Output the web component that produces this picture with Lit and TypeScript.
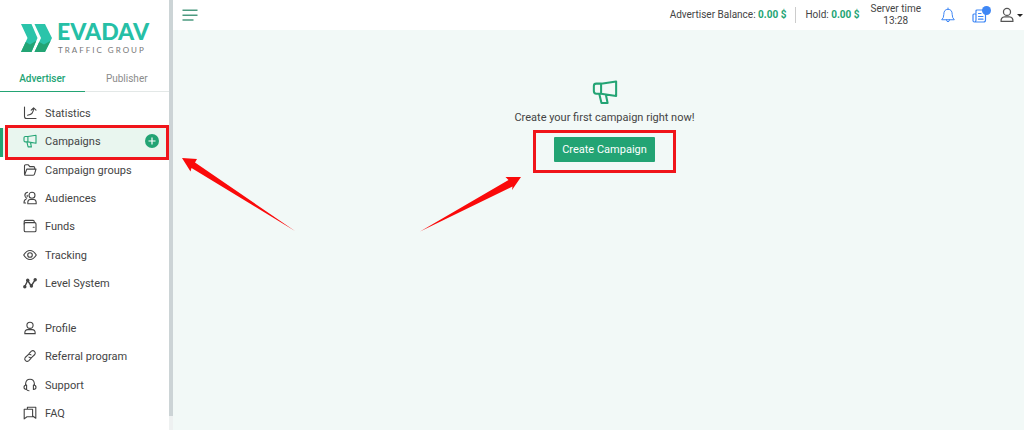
import { LitElement, html, css, svg, nothing } from "lit";
import { customElement, property, state } from "lit/decorators.js";

const megaphone = svg`<path d="M4.900 2.500H2.300Q1 2.500 1 3.800V6.500Q1 7.900 2.300 7.900H4.900ZM4.900 2.500L13 1.300V9.200L4.900 7.900M3.900 8L5.100 12.900H8.400L7.500 8.600"/>`;

const icons: Record<string, unknown> = {
  statistics: svg`<path d="M1.5 1V10.5Q1.5 12.5 3.5 12.5H13M4.5 9.3Q10.6 8.6 10.6 2M8.2 4.2L10.6 1.8L13 4.2"/>`,
  megaphone,
  folder: svg`<path d="M1.5 11V3Q1.5 1.8 2.7 1.8H5.3L6.8 3.6H10.5Q11.7 3.6 11.7 4.8V6M1.6 12L3.8 6.1H13L11.5 11.2Q11.2 12.2 10.2 12.2H2.2Q1.5 12.2 1.5 11"/>`,
  audiences: svg`<circle cx="9" cy="4.3" r="3"/><path d="M4.8 12.7Q4.4 8.6 7.4 8.5H10.6Q13.5 8.6 13.2 12.7ZM4.6 1.3Q1.6 1.8 1.9 4.7Q2.1 6.2 3.7 7.2M3 8.3Q.9 9 1 12H2.6M4.2 4.2V5.6"/>`,
  wallet: svg`<rect x="1.2" y="3.6" width="11.8" height="9.1" rx="1.3"/><path d="M1.2 5V2.6Q1.2 1.4 2.4 1.4H10.2Q11.4 1.4 11.4 3.5M10.2 8.2H11.2"/>`,
  eye: svg`<path d="M.7 7Q3.4 2.5 7 2.5T13.3 7Q10.6 11.5 7 11.5T.7 7Z"/><circle cx="7" cy="7" r="2.3"/>`,
  level: svg`<path d="M1.6 11L4.7 4.5L8.2 10L12.3 3.6" stroke-width="1.4"/><g fill="currentColor" stroke="none"><circle cx="1.8" cy="10.8" r="1.7"/><circle cx="4.7" cy="4.3" r="1.7"/><circle cx="8.4" cy="10" r="1.7"/><circle cx="12.2" cy="3.7" r="1.7"/></g>`,
  person: svg`<circle cx="7" cy="4.3" r="3.1"/><path d="M1.8 12.6Q1.6 8.7 4.9 8.6H9.1Q12.4 8.7 12.2 12.6Z"/>`,
  link: svg`<path d="M6 4.6L8.4 2.2Q9.9.9 11.5 2.3Q13 3.9 11.8 5.5L9 8.2Q7.5 9.3 6 8.1M8 9.4L5.6 11.8Q4.1 13.1 2.5 11.7Q1 10.1 2.2 8.5L5 5.8Q6.5 4.7 8 5.9"/>`,
  headset: svg`<path d="M2.6 7V5.8Q2.9 1.2 7 1.2T11.4 5.8V7M3.6 7V11.4Q1 11.4 1 9.2T3.6 7ZM10.4 7V11.4Q13 11.4 13 9.2T10.4 7ZM3.6 11.4Q4 12.8 6 12.8"/>`,
  chat: svg`<path d="M1.2 3.3H9.6V10.8H4L1.2 12.9ZM4.4 3.2V1.3H12.8V12.3L9.7 10"/>`,
};

interface Item {
  label: string;
  icon: string;
}

const mainItems: Item[] = [
  { label: "Statistics", icon: "statistics" },
  { label: "Campaigns", icon: "megaphone" },
  { label: "Campaign groups", icon: "folder" },
  { label: "Audiences", icon: "audiences" },
  { label: "Funds", icon: "wallet" },
  { label: "Tracking", icon: "eye" },
  { label: "Level System", icon: "level" },
];

const accountItems: Item[] = [
  { label: "Profile", icon: "person" },
  { label: "Referral program", icon: "link" },
  { label: "Support", icon: "headset" },
  { label: "FAQ", icon: "chat" },
];

@customElement("line-icon")
class LineIcon extends LitElement {
  @property() name = "";

  static styles = css`
    :host {
      display: block;
      flex: none;
      width: 14px;
      height: 14px;
    }
    svg {
      display: block;
      width: 100%;
      height: 100%;
      fill: none;
      stroke: currentColor;
      stroke-width: 1.1;
      stroke-linejoin: round;
      stroke-linecap: round;
    }
  `;

  render() {
    return html`<svg viewBox="0 0 14 14" aria-hidden="true">${icons[this.name]}</svg>`;
  }
}

@customElement("side-bar")
class SideBar extends LitElement {
  @state() private active = "Campaigns";

  static styles = css`
    :host {
      display: flex;
      flex: none;
      box-sizing: border-box;
      width: 173px;
      background: #fff;
    }
    .body {
      flex: 1;
      min-width: 0;
    }
    .track {
      width: 4px;
      background: #eef1f1;
    }
    .thumb {
      height: calc(100% - 14px);
      background: #ccd4d6;
    }
    .logo {
      display: flex;
      align-items: flex-end;
      gap: 5px;
      padding: 17px 0 0 20px;
      color: #26bfa6;
      text-decoration: none;
    }
    .mark {
      display: block;
      flex: none;
      width: 32px;
      height: 32px;
    }
    .words {
      display: flex;
      flex-direction: column;
    }
    .name {
      font: 900 23px/28px Lato, sans-serif;
    }
    .tag {
      font: 400 8px/10px Lato, sans-serif;
      letter-spacing: 2px;
      color: #777;
      padding-left: 1px;
      white-space: nowrap;
    }
    .tabs {
      display: grid;
      grid-template-columns: 1fr 1fr;
      margin-top: 11px;
      border-bottom: 1px solid #e3e8e7;
    }
    .tab {
      height: 26px;
      margin-bottom: -1px;
      padding: 0;
      border: 0;
      border-bottom: 1px solid transparent;
      background: none;
      font: 400 10px/24px Roboto, sans-serif;
      color: #8b8b8b;
    }
    .tab.on {
      border-color: #23a474;
      font-weight: 500;
      color: #23a474;
    }
    ul {
      display: grid;
      grid-auto-rows: 1fr;
      height: 198px;
      margin: 8px 0 0;
      padding: 0;
      list-style: none;
    }
    .account {
      height: 113px;
      margin-top: 17px;
    }
    li {
      position: relative;
      display: flex;
      align-items: center;
    }
    .link {
      display: flex;
      flex: 1;
      align-items: center;
      gap: 8px;
      padding-left: 23px;
      color: #444;
      text-decoration: none;
      line-height: 16px;
    }
    .link line-icon {
      margin-bottom: 2px;
    }
    .current {
      background: #e9f6ef;
      box-shadow: inset 3px 0 #23a474;
    }
    .current line-icon {
      color: #23a474;
    }
    .add {
      display: grid;
      place-items: center;
      width: 14px;
      height: 14px;
      margin: 0 10px 2px 0;
      padding: 0;
      border: 0;
      border-radius: 50%;
      background: #23a474;
    }
    .add svg {
      width: 8px;
      height: 8px;
      stroke: #fff;
      stroke-width: 1.2;
    }
    .marker {
      position: absolute;
      inset: -3px 0 -3px 5px;
      border: 3px solid #f0151a;
      pointer-events: none;
    }
  `;

  private row(item: Item) {
    const current = item.label === this.active;
    return html`<li class=${current ? "current" : ""}>
      <a class="link" href="#" aria-current=${current ? "page" : nothing}>
        <line-icon name=${item.icon}></line-icon>${item.label}
      </a>
      ${current
        ? html`<button class="add" aria-label="Add campaign">
              <svg viewBox="0 0 8 8"><path d="M4 .5V7.5M.5 4H7.5" /></svg>
            </button>
            <span class="marker"></span>`
        : nothing}
    </li>`;
  }

  render() {
    return html`
      <div class="body">
        <a class="logo" href="#">
          <svg class="mark" viewBox="0 0 32 32" aria-hidden="true">
            <path d="M1 1H11.500L17.500 15L11.500 29H1L7.500 15ZM14.500 1H25L32 15L25 29H14.500L21 15Z" fill="#2bc4aa" />
            <path d="M1 29L5.700 18.900L10 21.500L16.300 17.800L11.500 29ZM14.500 29L19.200 18.900L24 21.500L30.600 17.800L25 29Z" fill="#23a474" />
          </svg>
          <span class="words">
            <span class="name">EVADAV</span>
            <span class="tag">TRAFFIC GROUP</span>
          </span>
        </a>
        <div class="tabs">
          <button class="tab on">Advertiser</button>
          <button class="tab">Publisher</button>
        </div>
        <nav>
          <ul>${mainItems.map((i) => this.row(i))}</ul>
          <ul class="account">${accountItems.map((i) => this.row(i))}</ul>
        </nav>
      </div>
      <div class="track"><div class="thumb"></div></div>
    `;
  }
}

@customElement("top-bar")
class TopBar extends LitElement {
  static styles = css`
    :host {
      display: flex;
      align-items: center;
      height: 30px;
      padding: 0 1px 0 9px;
      background: #fff;
      font-size: 10px;
      line-height: 12px;
      white-space: nowrap;
    }
    button {
      display: flex;
      align-items: center;
      padding: 0;
      border: 0;
      background: none;
      color: #555;
    }
    svg {
      display: block;
      fill: none;
      stroke: currentColor;
      stroke-linecap: round;
      stroke-linejoin: round;
    }
    .menu {
      margin-right: auto;
      color: #4c9a80;
    }
    .menu svg {
      stroke-linecap: butt;
    }
    b {
      font-weight: 700;
      color: #23a474;
    }
    .hold {
      margin-left: 9px;
      padding: 2px 0 2px 9px;
      border-left: 1px solid #ccc;
    }
    .time {
      margin: 0 20px 0 11px;
      text-align: center;
    }
    .blue {
      color: #3f87f5;
    }
    .news {
      position: relative;
      margin: 0 12px 0 17px;
    }
    .dot {
      position: absolute;
      top: -2px;
      right: -4px;
      width: 9px;
      height: 9px;
      border-radius: 50%;
      background: #3f87f5;
    }
    .user {
      gap: 2px;
    }
    .user line-icon {
      width: 16px;
      height: 16px;
    }
    .caret {
      border: 3px solid transparent;
      border-top-color: #222;
      border-bottom: 0;
    }
  `;

  render() {
    return html`
      <button class="menu" aria-label="Toggle menu">
        <svg width="16" height="12" viewBox="0 0 16 12" stroke-width="1.5">
          <path d="M.5 1.250H15.500M.5 6.250H15.500M.5 11H11.500" />
        </svg>
      </button>
      <span>Advertiser Balance: <b>0.00 $</b></span>
      <span class="hold">Hold: <b>0.00 $</b></span>
      <span class="time">Server time<br />13:28</span>
      <button class="blue" aria-label="Notifications">
        <svg width="14" height="16" viewBox="0 0 14 16">
          <path d="M7 1V2.200M1 12.500Q2.800 11 2.800 7.500Q2.800 2.300 7 2.300T11.200 7.500Q11.200 11 13 12.500ZM5.500 12.700Q5.600 14.800 7 14.800T8.500 12.700" />
        </svg>
      </button>
      <button class="blue news" aria-label="News">
        <svg width="15" height="15" viewBox="0 0 15 15" stroke-width="1.2">
          <path d="M4 5V3Q4 2 5 2H12Q13.500 2 13.500 3.500V12Q13.500 14 11.500 14H2.500Q1 14 1 12.500V7Q1 6 2 6H4V12Q4 14 2.500 14M6.500 5.500H9M6.500 8.500H11M6.500 11.200H11" />
        </svg>
        <span class="dot"></span>
      </button>
      <button class="user" aria-label="Account">
        <line-icon name="person"></line-icon><span class="caret"></span>
      </button>
    `;
  }
}

@customElement("app-root")
class AppRoot extends LitElement {
  static styles = css`
    :host {
      display: flex;
      min-height: 100vh;
      background: #f2f9f7;
      font: 400 11px/14px Roboto, sans-serif;
      color: #444;
    }
    .page {
      position: relative;
      flex: 1;
      min-width: 0;
    }
    .empty {
      display: flex;
      flex-direction: column;
      align-items: center;
      padding: 49px 0 0 12px;
    }
    .big {
      width: 26px;
      height: 26px;
      color: #23a474;
    }
    p {
      margin: 6px 0 5px;
    }
    .target {
      position: relative;
      padding: 4px 18px 8px;
      border: 3px solid #f0151a;
    }
    .create {
      height: 25px;
      padding: 0 8px;
      border: 0;
      border-radius: 1px;
      background: #23a474;
      font: inherit;
      color: #fff;
    }
    .arrow {
      position: absolute;
      fill: #fa0a0a;
      pointer-events: none;
    }
    .to-menu {
      top: 157px;
      left: 9px;
    }
    .to-button {
      top: 43px;
      right: calc(100% + 15px);
    }
  `;

  render() {
    return html`
      <side-bar></side-bar>
      <div class="page">
        <top-bar></top-bar>
        <main class="empty">
          <line-icon class="big" name="megaphone"></line-icon>
          <p>Create your first campaign right now!</p>
          <div class="target">
            <button class="create">Create Campaign</button>
            <svg class="arrow to-button" width="101" height="56" viewBox="0 0 101 56" aria-hidden="true">
              <path d="M101 1L85.500 1L88.500 4L0 55.500L92.500 10.500L92 14Z" />
            </svg>
          </div>
        </main>
        <svg class="arrow to-menu" width="114" height="75" viewBox="0 0 114 75" aria-hidden="true">
          <path d="M0 1L15 2L13 5.500L113 74L9.500 11L8.500 14.500Z" />
        </svg>
      </div>
    `;
  }
}
